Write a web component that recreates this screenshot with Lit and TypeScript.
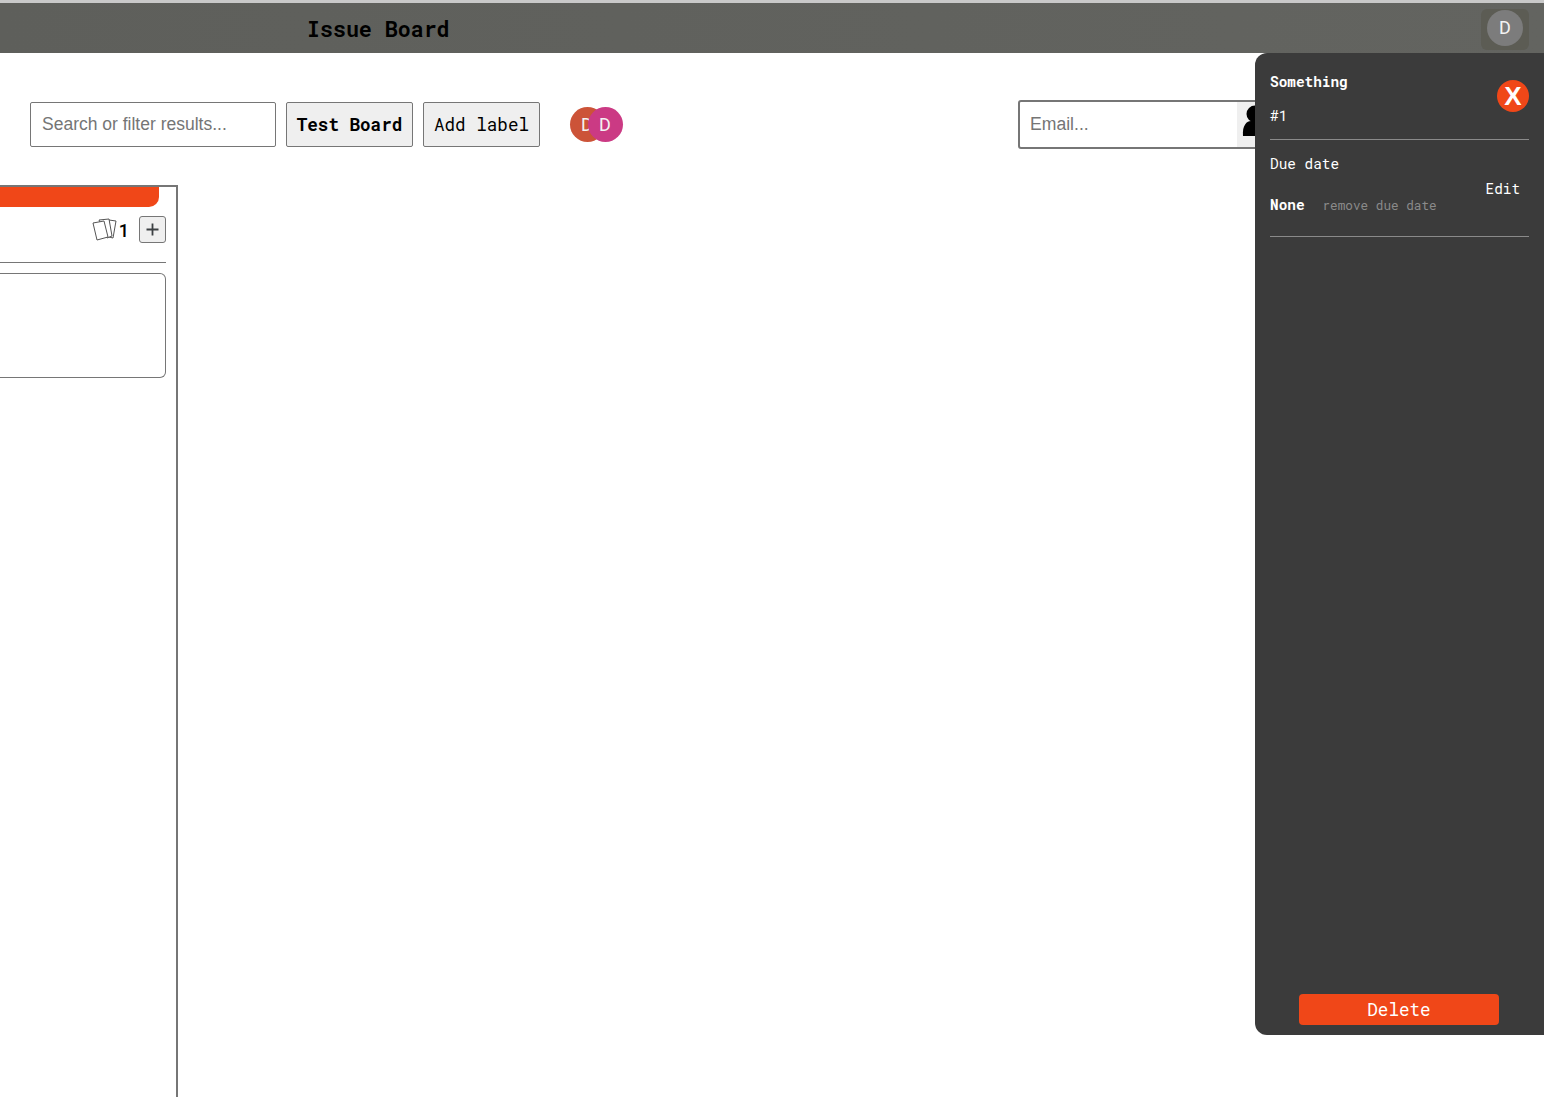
import { LitElement, html, css } from "lit";
import { customElement } from "lit/decorators.js";

@customElement("app-root")
export class AppRoot extends LitElement {
  static styles = css`
    :host { display: block; position: relative; width: 1544px; height: 1097px; overflow: hidden; background: #fff;
      font-family: "Roboto Mono", "DejaVu Sans Mono", "Liberation Mono", monospace; }
    * { box-sizing: border-box; }
    .header { height: 53px; border-top: 3px solid #c9c9c9; background: linear-gradient(90deg, #5e5f5b, #636460);
      display: flex; align-items: center; justify-content: space-between; padding: 0 15px 0 307px; }
    .title { font-size: 21.6px; font-weight: 700; color: #000; margin-top: 0; }
    .me { width: 48px; height: 41px; background: #5c5c54; border-radius: 6px; display: flex; align-items: center; justify-content: center; margin-top: 6px; align-self: flex-start; padding-bottom: 3px; }
    .av { width: 36px; height: 36px; border-radius: 50%; display: flex; align-items: center; justify-content: center; padding-bottom: 1px;
      font-family: Roboto, sans-serif; font-size: 18px; color: #f3f3f3; background: #7c7c7c; }
    .toolbar { display: flex; align-items: flex-start; height: 132px; padding: 49px 0 0 30px; }
    .search { width: 246px; height: 45px; border: 1px solid #767676; border-radius: 2px; padding: 0 11px;
      font: 17.5px "Liberation Sans", Arial, sans-serif; color: #757575; display: flex; align-items: center; }
    .btn { height: 45px; border: 1px solid #767676; border-radius: 2px; background: #efefef; color: #000;
      font: 400 17.6px "Roboto Mono", "DejaVu Sans Mono", monospace; display: flex; align-items: center; justify-content: center; margin-left: 10px; }
    .b1 { width: 127px; font-weight: 700; }
    .b2 { width: 117px; }
    .members { display: flex; margin: 5px 0 0 30px; }
    .members .av { width: 35px; height: 35px; padding: 0 1px 1px 0; }
    .m1 { background: #cc5338; }
    .m2 { background: #cb3a84; margin-left: -17px; }
    .email { display: flex; margin-left: auto; width: 290px; height: 49px; border: 2px solid #767676; border-radius: 3px; margin-top: -2px; flex: none; }
    .email .field { width: 217px; padding-left: 10px; font: 17.6px "Liberation Sans", Arial, sans-serif; color: #757575; display: flex; align-items: center; }
    .email .ic { flex: 1; background: #efefef; padding: 3px 0 0 5px; }
    .spacer { width: 236px; flex: none; }
    .board { width: 178px; height: 912px; border: solid #767676; border-width: 2px 2px 0 0; padding-right: 10px; overflow: hidden; }
    .bar { height: 20px; width: 159px; background: #f04718; border-radius: 0 0 10px 0; }
    .chead { height: 56px; border-bottom: 1px solid #767676; display: flex; align-items: flex-start; justify-content: flex-end; padding-top: 9px; width: 166px; }
    .icon { margin-top: 2px; }
    .count { font: 500 18px Roboto, sans-serif; color: #000; margin: 5px 10px 0 2px; line-height: 19px; }
    .plus { width: 27px; height: 27px; border: 1px solid #767676; border-radius: 3px; background: #efefef; display: flex; align-items: center; justify-content: center; }
    .card { width: 166px; height: 105px; margin-top: 10px; border: 1px solid #767676; border-left: 0; border-radius: 0 6px 6px 0; }
    .panel { position: absolute; left: 1255px; top: 53px; width: 289px; height: 982px; background: #3b3b3b; border-radius: 12px 0 0 12px; color: #fff; padding: 0 15px; display: flex; flex-direction: column; }
    .top { height: 87px; border-bottom: 1px solid #8a8a8a; position: relative; width: 259px; }
    .name { font-size: 14.4px; font-weight: 700; position: absolute; left: 0; top: 19px; line-height: 20px; }
    .num { font-size: 14.4px; position: absolute; left: 0; top: 53px; line-height: 20px; }
    .close { position: absolute; right: 0; top: 27px; width: 32px; height: 32px; border-radius: 50%; background: #f04718; display: flex; align-items: center; justify-content: center;
      font: 700 26px "Liberation Sans", Arial, sans-serif; color: #fff; }
    .due { height: 97px; border-bottom: 1px solid #8a8a8a; position: relative; width: 259px; }
    .due span { position: absolute; white-space: nowrap; line-height: 20px; font-size: 14.4px; }
    .l1 { left: 0; top: 14px; }
    .edit { left: 215.5px; top: 39px; }
    .none { left: 0; top: 55px; font-weight: 700; }
    .due .rm { left: 52.5px; top: 55px; font-size: 12.7px; color: #8a8a8a; }
    .del { margin: auto 0 10px 29px; width: 200px; height: 31px; background: #f04718; border-radius: 4px; font-size: 17.6px; display: flex; align-items: center; justify-content: center; color: #fff; }
  `;

  render() {
    return html`
      <div class="header">
        <div class="title">Issue Board</div>
        <div class="me"><div class="av">D</div></div>
      </div>
      <div class="toolbar">
        <div class="search">Search or filter results...</div>
        <div class="btn b1">Test Board</div>
        <div class="btn b2">Add label</div>
        <div class="members"><div class="av m1">D</div><div class="av m2">D</div></div>
        <div class="email">
          <div class="field">Email...</div>
          <div class="ic">
            <svg width="26" height="32" viewBox="0 0 26 32"><circle cx="13" cy="9" r="8.5" fill="#000"/><path d="M1 31c-1-11 4-15 8-15h8c4 0 8 4 8 15z" fill="#000"/></svg>
          </div>
        </div>
        <div class="spacer"></div>
      </div>
      <div class="board">
        <div class="bar"></div>
        <div class="chead">
          <svg class="icon" width="25" height="23" viewBox="0 0 25 23" fill="#fff" stroke="#555" stroke-width="1">
            <path d="M17 2l7 1-3 17-4-1z"/>
            <path d="M7 2l10-1 3 17-5 2z"/>
            <path d="M1 5l11-2 4 16-11 3z"/>
          </svg>
          <div class="count">1</div>
          <div class="plus"><svg width="13" height="13" viewBox="0 0 13 13"><path d="M6.5 0.5v12M0.5 6.5h12" stroke="#3c4043" stroke-width="1.8"/></svg></div>
        </div>
        <div class="card"></div>
      </div>
      <div class="panel">
        <div class="top">
          <div class="name">Something</div>
          <div class="num">#1</div>
          <div class="close">X</div>
        </div>
        <div class="due">
          <span class="l1">Due date</span>
          <span class="edit">Edit</span>
          <span class="none">None</span>
          <span class="rm">remove due date</span>
        </div>
        <div class="del">Delete</div>
      </div>
    `;
  }
}
